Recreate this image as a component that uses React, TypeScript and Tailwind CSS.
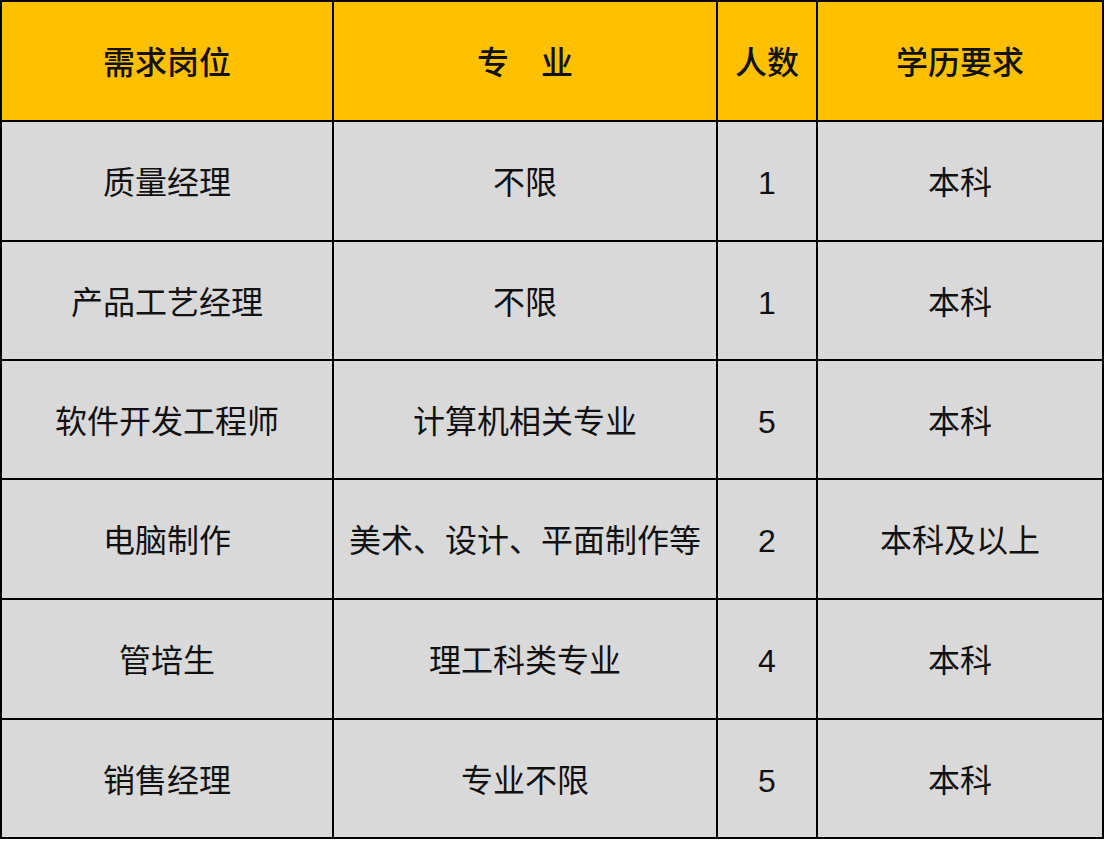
const header = ["需求岗位", "专　业", "人数", "学历要求"];

const rows = [
  ["质量经理", "不限", "1", "本科"],
  ["产品工艺经理", "不限", "1", "本科"],
  ["软件开发工程师", "计算机相关专业", "5", "本科"],
  ["电脑制作", "美术、设计、平面制作等", "2", "本科及以上"],
  ["管培生", "理工科类专业", "4", "本科"],
  ["销售经理", "专业不限", "5", "本科"],
];

const rowHeights = ["h-[120px]", "h-[120px]", "h-[119px]", "h-[119px]", "h-[120px]", "h-[120px]", "h-[119px]"];

export default function App() {
  return (
    <div className="w-[1106px] h-[842px] bg-white font-['Liberation_Sans','Noto_Sans_CJK_SC',sans-serif] text-[32px] text-[#111]">
      <div className="grid w-[1104px] grid-cols-[332px_384px_100px_286px] border-l-2 border-t-2 border-black">
        {header.map((h, i) => (
          <div
            key={i}
            className={`${rowHeights[0]} flex items-center justify-center border-b-2 border-r-2 border-black bg-[#ffc000] pt-1 font-medium`}
          >
            {h}
          </div>
        ))}
        {rows.map((r, ri) =>
          r.map((c, ci) => (
            <div
              key={`${ri}-${ci}`}
              className={`${rowHeights[ri + 1]} flex items-center justify-center border-b-2 border-r-2 border-black bg-[#d9d9d9] pt-1`}
            >
              {c}
            </div>
          ))
        )}
      </div>
    </div>
  );
}
